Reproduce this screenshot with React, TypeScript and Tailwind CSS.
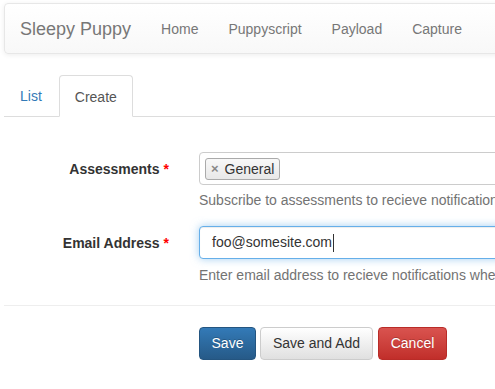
const NAV_LINKS = ["Home", "Puppyscript", "Payload", "Capture"];

function Required() {
  return <span className="ml-1 text-[#ff0000]">*</span>;
}

export default function App() {
  return (
    <div className="w-[495px] h-[389px] overflow-hidden bg-white text-[14px] text-[#333] font-['Liberation_Sans',Arial,sans-serif]">
      <div className="w-[700px] pl-1 pt-[3px]">
        {/* navbar */}
        <nav className="flex items-center h-[51px] pt-[2px] rounded-[4px] border border-[#e7e7e7] bg-gradient-to-b from-white to-[#f8f8f8] shadow-[0_1px_5px_rgba(0,0,0,0.075)]">
          <span className="pl-[15px] pr-[15px] text-[18px] text-[#777]">Sleepy Puppy</span>
          {NAV_LINKS.map((link) => (
            <span key={link} className="px-[15px] text-[#777]">{link}</span>
          ))}
        </nav>

        {/* tabs */}
        <div className="mt-[21px] flex border-b border-[#ddd]">
          <div className="ml-px mr-[2px] px-[15px] pt-[11px] pb-[9px] leading-5 text-[#337ab7]">List</div>
          <div className="-mb-px px-[15px] pt-[11px] pb-[9px] leading-5 text-[#555] bg-white border border-[#ddd] border-b-transparent rounded-t-[4px]">Create</div>
        </div>

        {/* form */}
        <div className="mt-[35px] flex">
          <div className="w-[165px] pt-[7px] text-right font-bold">Assessments<Required /></div>
          <div className="ml-[30px]">
            <div className="w-[400px] h-[33px] flex items-center px-[5px] border border-[#ccc] rounded-[4px] bg-white">
              <span className="flex items-center h-[22px] px-[5px] border border-[#aaa] rounded-[3px] bg-gradient-to-b from-[#f8f8f8] to-[#e8e8e8] leading-none">
                <span className="text-[#888] text-[13px] mr-[6px] font-bold">×</span>
                <span className="text-[#333]">General</span>
              </span>
            </div>
            <p className="mt-[5px] leading-5 whitespace-nowrap text-[#737373]">Subscribe to assessments to recieve notifications</p>
          </div>
        </div>

        <div className="mt-[16px] flex">
          <div className="w-[165px] pt-[7px] text-right font-bold">Email Address<Required /></div>
          <div className="ml-[30px]">
            <div className="w-[400px] h-[33px] flex items-center px-[12px] border border-[#66afe9] rounded-[4px] bg-white shadow-[inset_0_1px_1px_rgba(0,0,0,0.075),0_0_8px_rgba(102,175,233,0.6)]">
              <span className="text-[#333]">foo@somesite.com</span>
              <span className="ml-px w-px h-[18px] bg-[#333]" />
            </div>
            <p className="mt-[6px] leading-5 whitespace-nowrap text-[#737373]">Enter email address to recieve notifications when</p>
          </div>
        </div>

        <div className="mt-[20px] border-t border-[#eee]" />

        {/* buttons */}
        <div className="mt-[21px] ml-[195px] flex gap-[4px]">
          <button className="w-[57px] h-[33px] rounded-[4px] border border-[#245580] bg-gradient-to-b from-[#337ab7] to-[#265a88] text-white [text-shadow:0_-1px_0_rgba(0,0,0,0.2)]">Save</button>
          <button className="w-[113px] h-[33px] rounded-[4px] border border-[#ccc] bg-gradient-to-b from-white to-[#e0e0e0] text-[#333]">Save and Add</button>
          <button className="ml-px w-[69px] h-[33px] rounded-[4px] border border-[#b92c28] bg-gradient-to-b from-[#d9534f] to-[#c12e2a] text-white [text-shadow:0_-1px_0_rgba(0,0,0,0.2)]">Cancel</button>
        </div>
      </div>
    </div>
  );
}
